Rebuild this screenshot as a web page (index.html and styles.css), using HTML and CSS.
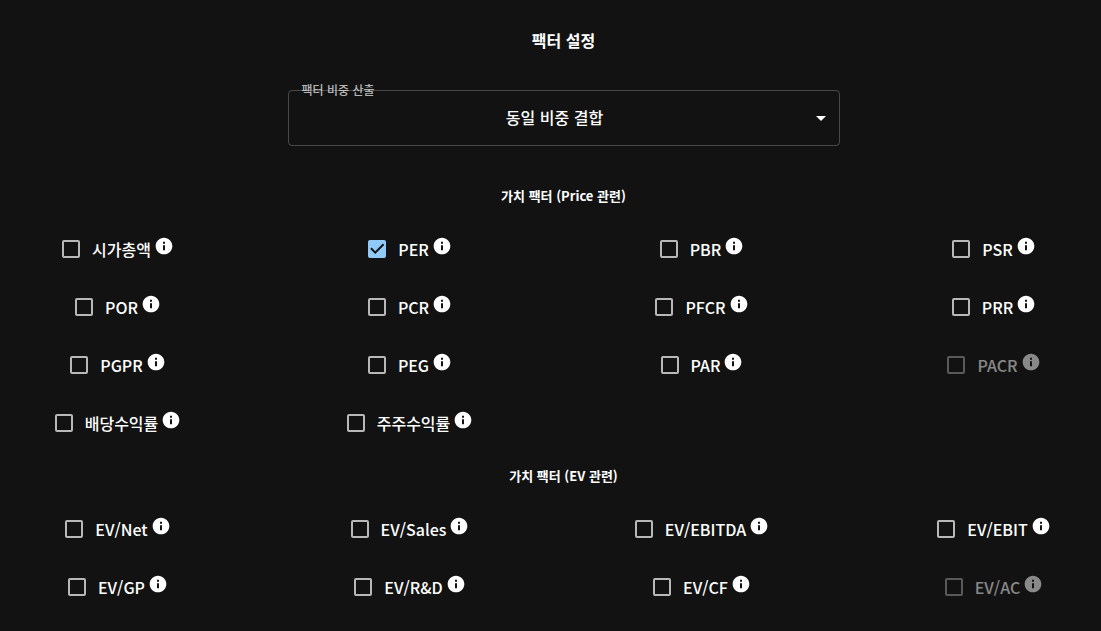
FILE: index.html
```
<!DOCTYPE html>
<html lang="ko">
<head>
  <meta charset="UTF-8" />
  <meta name="viewport" content="width=device-width, initial-scale=1" />
  <title>팩터 설정</title>
  <link rel="stylesheet" href="styles.css">
</head>
<body>
  <main class="container">
    <h1>팩터 설정</h1>
    <div class="select-field">
      <label for="weightSelect">팩터 비중 산출</label>
      <select id="weightSelect">
        <option value="equal">동일 비중 결합</option>
      </select>
      <svg class="arrow" viewBox="0 0 24 24"><path d="M7 10l5 5 5-5z" /></svg>
    </div>

    <h2>가치 팩터 (Price 관련)</h2>
    <div class="factors" id="priceFactors"></div>

    <h2>가치 팩터 (EV 관련)</h2>
    <div class="factors" id="evFactors"></div>
  </main>
  <script>
    const priceFactors = [
      { name: '시가총액' },
      { name: 'PER', checked: true },
      { name: 'PBR' },
      { name: 'PSR' },
      { name: 'POR' },
      { name: 'PCR' },
      { name: 'PFCR' },
      { name: 'PRR' },
      { name: 'PGPR' },
      { name: 'PEG' },
      { name: 'PAR' },
      { name: 'PACR', disabled: true },
      { name: '배당수익률' },
      { name: '주주수익률' }
    ];
    const evFactors = [
      { name: 'EV/Net' },
      { name: 'EV/Sales' },
      { name: 'EV/EBITDA' },
      { name: 'EV/EBIT' },
      { name: 'EV/GP' },
      { name: 'EV/R&amp;D' },
      { name: 'EV/CF' },
      { name: 'EV/AC', disabled: true }
    ];

    function renderFactors(id, factors) {
      document.getElementById(id).innerHTML = factors.map(factor => `
        <label class="factor">
          <input type="checkbox" ${factor.checked ? 'checked' : ''} ${factor.disabled ? 'disabled' : ''} />
          <span>${factor.name}</span>
          <svg class="info" viewBox="0 0 24 24"><path d="M12 2C6.48 2 2 6.48 2 12s4.48 10 10 10 10-4.48 10-10S17.52 2 12 2zm1.2 15h-2.4v-6h2.4v6zm0-7.6h-2.4V7h2.4v2.4z" /></svg>
        </label>
      `).join('');
    }

    renderFactors('priceFactors', priceFactors);
    renderFactors('evFactors', evFactors);
  </script>
</body>
</html>
```

FILE: styles.css
```
body {
  margin: 0;
  background-color: #121212;
  color: #fff;
  font-family: 'Noto Sans CJK KR', sans-serif;
  font-size: 16px;
  font-weight: 500;
  line-height: 24px;
}
.container {
  padding: 28px 10px 24px 36px;
}
h1, h2 {
  margin: 0;
  text-align: center;
  font-weight: 700;
}
h1 {
  font-size: 16px;
  margin-bottom: 38px;
}
h2 {
  font-size: 13px;
  line-height: 20px;
}
.select-field {
  position: relative;
  max-width: 552px;
  margin: 0 auto 40px;
}
.select-field label {
  position: absolute;
  top: -10px;
  left: 14px;
  font-size: 12px;
  line-height: 20px;
  color: rgba(255, 255, 255, 0.7);
}
.select-field select {
  display: block;
  appearance: none;
  box-sizing: border-box;
  width: 100%;
  height: 56px;
  padding: 0 32px 2px 14px;
  border: 1px solid rgba(255, 255, 255, 0.23);
  border-radius: 4px;
  background: transparent;
  color: #fff;
  font: inherit;
  text-align: center;
  text-align-last: center;
}
.arrow {
  position: absolute;
  top: 16px;
  right: 7px;
  width: 24px;
  height: 24px;
  fill: #fff;
  pointer-events: none;
}
.factors {
  display: grid;
  grid-template-columns: repeat(4, 1fr);
  column-gap: 113px;
  row-gap: 16px;
  margin: 22px 0;
}
.factor {
  display: flex;
  align-items: center;
  justify-self: center;
  height: 42px;
  margin: 0 16px 0 -11px;
  white-space: nowrap;
}
.factor input {
  appearance: none;
  box-sizing: border-box;
  width: 18px;
  height: 18px;
  margin: 0 12px;
  border: 2px solid rgba(255, 255, 255, 0.7);
  border-radius: 2px;
}
.factor input:checked {
  border: none;
  background-color: #90caf9;
}
.factor input:checked::before {
  content: '';
  display: block;
  height: 18px;
  background-color: #121212;
  clip-path: polygon(7px 14px, 2px 9px, 3.4px 7.6px, 7px 11.2px, 14.6px 3.6px, 16px 5px);
}
.factor input:disabled {
  border-color: rgba(255, 255, 255, 0.3);
}
.factor:has(input:disabled) {
  color: rgba(255, 255, 255, 0.5);
}
.info {
  width: 20px;
  height: 20px;
  margin: 0 0 6px 3px;
  fill: currentColor;
}
```
